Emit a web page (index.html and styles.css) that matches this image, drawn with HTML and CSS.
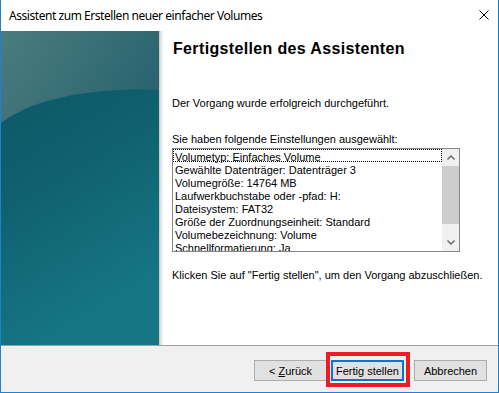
FILE: index.html
```html
<!DOCTYPE html>
<html lang="de">
<head>
<meta charset="utf-8">
<title>Assistent</title>
<link rel="stylesheet" href="styles.css">
</head>
<body>
<div class="window">
  <div class="titlebar">
    <span class="title">Assistent zum Erstellen neuer einfacher Volumes</span>
    <svg class="close" width="10" height="10" viewBox="0 0 10 10"><path d="M0.5 0.5 L9.5 9.5 M9.5 0.5 L0.5 9.5" stroke="#000" stroke-width="1" fill="none"/></svg>
  </div>
  <div class="main">
    <div class="side">
      <svg class="art" width="158" height="314" viewBox="0 0 158 314">
        <defs>
          <linearGradient id="bg" x1="0" y1="0" x2="0.3" y2="1">
            <stop offset="0" stop-color="#0b5361"/>
            <stop offset="0.5" stop-color="#10606f"/>
            <stop offset="1" stop-color="#167682"/>
          </linearGradient>
          <linearGradient id="hi" x1="0" y1="0" x2="1" y2="0.4">
            <stop offset="0" stop-color="#4b7c7e"/>
            <stop offset="1" stop-color="#2b6570"/>
          </linearGradient>
        </defs>
        <rect width="158" height="314" fill="url(#bg)"/>
        <path d="M0 0 H158 V59 C110 57 40 62 0 92 Z" fill="url(#hi)"/>
      </svg>
      <div class="shade"></div>
    </div>
    <div class="content">
      <h1 class="heading">Fertigstellen des Assistenten</h1>
      <p class="text first">Der Vorgang wurde erfolgreich durchgeführt.</p>
      <p class="text second">Sie haben folgende Einstellungen ausgewählt:</p>
      <div class="listbox">
        <div class="items">
          <div class="item focus">Volumetyp: Einfaches Volume</div>
          <div class="item">Gewählte Datenträger: Datenträger 3</div>
          <div class="item">Volumegröße: 14764 MB</div>
          <div class="item">Laufwerkbuchstabe oder -pfad: H:</div>
          <div class="item">Dateisystem: FAT32</div>
          <div class="item">Größe der Zuordnungseinheit: Standard</div>
          <div class="item">Volumebezeichnung: Volume</div>
          <div class="item">Schnellformatierung: Ja</div>
        </div>
        <div class="scrollbar">
          <div class="arrow">
            <svg width="8" height="5" viewBox="0 0 8 5"><path d="M0.5 4.5 L4 1 L7.5 4.5" stroke="#606060" stroke-width="1.4" fill="none"/></svg>
          </div>
          <div class="thumb"></div>
          <div class="track"></div>
          <div class="arrow">
            <svg width="8" height="5" viewBox="0 0 8 5"><path d="M0.5 0.5 L4 4 L7.5 0.5" stroke="#606060" stroke-width="1.4" fill="none"/></svg>
          </div>
        </div>
      </div>
      <p class="text third">Klicken Sie auf "Fertig stellen", um den Vorgang abzuschließen.</p>
    </div>
  </div>
  <div class="footer">
    <button class="btn">&lt; <u>Z</u>urück</button>
    <button class="btn primary">Fertig stellen<span class="mark"></span></button>
    <button class="btn cancel">Abbrechen</button>
  </div>
</div>
</body>
</html>
```

FILE: styles.css
```css
html, body {
  margin: 0;
  padding: 0;
  background: #ffffff;
}
.window {
  width: 499px;
  height: 393px;
  box-sizing: border-box;
  border: 1px solid #1883d7;
  border-top: none;
  background: #ffffff;
  display: flex;
  flex-direction: column;
  font-family: "Liberation Sans", Arial, sans-serif;
  font-size: 11px;
  color: #000;
}
.titlebar {
  height: 31px;
  flex: none;
  display: flex;
  align-items: center;
  justify-content: space-between;
  padding: 0 9px 0 8px;
  box-sizing: border-box;
}
.title {
  font-family: "Noto Sans", "Open Sans", sans-serif;
  font-size: 12px;
  letter-spacing: -0.45px;
  color: #000;
  margin-top: -1px;
}
.close {
  display: block;
  margin-top: -1px;
}
.main {
  height: 314px;
  flex: none;
  display: flex;
  border-bottom: 1px solid #a0a0a0;
}
.side {
  display: flex;
  flex: none;
}
.art {
  display: block;
}
.shade {
  width: 5px;
  background: linear-gradient(to right, #c4c4c4, #ececec 50%, #ffffff);
}
.content {
  flex: 1;
  padding-left: 8px;
  display: flex;
  flex-direction: column;
}
.heading {
  margin: 8px 0 0 1px;
  font-family: "Liberation Sans", Arial, sans-serif;
  font-weight: bold;
  font-size: 16px;
  letter-spacing: 0.35px;
  line-height: 20px;
  color: #000;
}
.text {
  margin: 0;
  line-height: 13px;
}
.first { margin-top: 38px; }
.second { margin-top: 23px; }
.third { margin-top: 17px; }
.listbox {
  margin-top: 2px;
  width: 288px;
  height: 104px;
  box-sizing: border-box;
  border: 1px solid #828790;
  display: flex;
  overflow: hidden;
}
.items {
  flex: 1;
  overflow: hidden;
}
.item {
  height: 13px;
  line-height: 16px;
  padding-left: 2px;
  white-space: nowrap;
  box-sizing: border-box;
}
.item.focus {
  outline: 1px dotted #000;
  outline-offset: -1px;
}
.scrollbar {
  width: 17px;
  flex: none;
  background: #f0f0f0;
  display: flex;
  flex-direction: column;
}
.arrow {
  height: 17px;
  display: flex;
  align-items: center;
  justify-content: center;
  flex: none;
}
.thumb {
  height: 58px;
  background: #cdcdcd;
  flex: none;
}
.track {
  flex: 1;
}
.footer {
  flex: 1;
  background: #f0f0f0;
  display: flex;
  justify-content: flex-end;
  align-items: flex-start;
  padding: 14px 11px 0 0;
}
.btn {
  position: relative;
  width: 73px;
  height: 21px;
  box-sizing: border-box;
  background: #e1e1e1;
  border: 1px solid #adadad;
  font-family: "Liberation Sans", Arial, sans-serif;
  font-size: 11px;
  color: #000;
  padding: 0;
  margin: 0;
}
.btn u {
  text-decoration: underline;
}
.primary {
  margin-left: 4px;
  border: 2px solid #0078d7;
}
.cancel {
  margin-left: 10px;
}
.mark {
  position: absolute;
  left: -7px;
  top: -10px;
  right: -8px;
  bottom: -8px;
  border: 4px solid #ed1c24;
}
```
